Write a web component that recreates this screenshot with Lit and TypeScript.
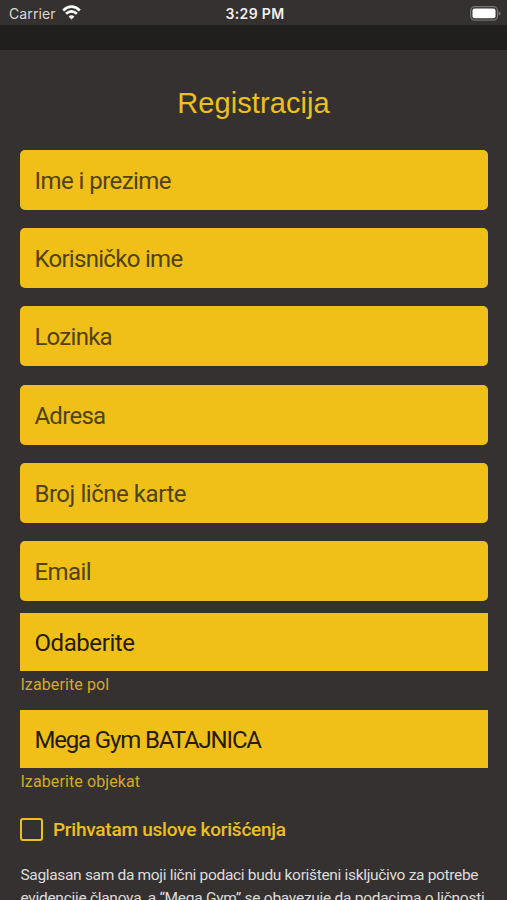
import { LitElement, html, css } from "lit";
import { customElement } from "lit/decorators.js";

interface Label {
  text: string;
  track: number;
}

const tracked = (l: Label) => html`<span style="letter-spacing:${l.track}px">${l.text}</span>`;

const FIELDS: Label[] = [
  { text: "Ime i prezime", track: -0.54 },
  { text: "Korisničko ime", track: -0.7 },
  { text: "Lozinka", track: -0.73 },
  { text: "Adresa", track: -0.7 },
  { text: "Broj lične karte", track: -0.45 },
  { text: "Email", track: -0.55 },
];

const SELECTS: { value: Label; hint: string }[] = [
  { value: { text: "Odaberite", track: -0.4 }, hint: "Izaberite pol" },
  { value: { text: "Mega Gym BATAJNICA", track: -1.15 }, hint: "Izaberite objekat" },
];

const LEGAL: Label[] = [
  { text: "Saglasan sam da moji lični podaci budu korišteni isključivo za potrebe", track: -0.32 },
  { text: "evidencije članova, a “Mega Gym” se obavezuje da podacima o ličnosti", track: -0.28 },
];

@customElement("status-bar")
class StatusBar extends LitElement {
  static styles = css`
    :host { display: grid; grid-template-columns: 1fr auto 1fr; align-items: center; height: 25px; padding: 0 6px 0 9px;
      font-family: Inter, sans-serif; color: #f2f0ef; box-sizing: border-box; }
    .carrier { display: flex; align-items: center; gap: 6px; font-size: 14px; color: #d9d7d6; padding-top: 2px; letter-spacing: 0.1px; }
    .wifi { display: block; margin-top: -2px; }
    .time { font-size: 14px; font-weight: 600; padding-top: 2px; letter-spacing: 0.35px; }
    .battery { display: block; justify-self: end; margin-top: 1px; }
  `;
  render() {
    return html`
      <div class="carrier"><span>Carrier</span>
        <svg class="wifi" width="19" height="15" viewBox="0 0 19 15" fill="none" stroke="#fff" stroke-width="2.7">
          <path d="M1.2 5.4 Q9.5 -2 17.8 5.4" />
          <path d="M4.1 8.8 Q9.5 4 14.9 8.8" />
          <path d="M9.5 14.4 L6.6 11.5 Q9.5 9 12.4 11.5 Z" fill="#fff" stroke="none" />
        </svg>
      </div>
      <div class="time">3:29 PM</div>
      <svg class="battery" width="31" height="15" viewBox="0 0 31 15">
        <rect x="0.7" y="0.7" width="26.8" height="13.4" rx="4" fill="none" stroke="#777372" stroke-width="1.3" />
        <rect x="2.5" y="2.5" width="23" height="9.8" rx="2" fill="#fff" />
        <path d="M28.6 5.2 Q30.6 6 30.6 7.4 Q30.6 8.8 28.6 9.6 Z" fill="#777372" />
      </svg>`;
  }
}

@customElement("form-field")
class FormField extends LitElement {
  static styles = css`
    :host { display: flex; align-items: center; height: 60px; padding: 2px 14px 0; box-sizing: border-box;
      background: #f0c019; border-radius: 5px; color: #51430f; font-size: 24px; }
  `;
  render() {
    return html`<slot></slot>`;
  }
}

@customElement("form-select")
class FormSelect extends LitElement {
  static styles = css`
    :host { display: block; }
    .box { display: flex; align-items: center; height: 58.5px; padding: 2px 14px 0; box-sizing: border-box;
      background: #f0c019; color: #241d08; font-size: 24px; }
    .hint { height: 26px; line-height: 27px; font-size: 16px; letter-spacing: 0.11px; color: #d3aa25; }
  `;
  render() {
    return html`<div class="box"><slot></slot></div><div class="hint"><slot name="hint"></slot></div>`;
  }
}

@customElement("app-root")
class AppRoot extends LitElement {
  static styles = css`
    :host { display: block; height: 900px; overflow: hidden; background: #353130; font-family: Roboto, sans-serif; }
    .band { height: 25px; background: #211f1d; }
    .title { margin: 0; padding-top: 35px; height: 65px; text-align: center;
      font: 400 29px/36px "Liberation Sans", Arial, sans-serif; color: #edc01d; letter-spacing: 0.1px; }
    .form { padding: 0 19.5px 0 20.4px; }
    .fields { display: grid; gap: 18.2px; }
    .selects { display: grid; gap: 12.2px; margin-top: 12px; }
    .terms { display: flex; align-items: center; gap: 10px; margin-top: 23px; height: 24px; color: #edc01d;
      font-size: 19px; font-weight: 500; letter-spacing: -0.24px; }
    .check { width: 22.6px; height: 23px; box-sizing: border-box; border: 2px solid #edc01d; border-radius: 3px; }
    .legal { margin: 22.5px 0 0; font-size: 15.5px; line-height: 23px; color: #dedcdb; white-space: nowrap; }
    .line { display: block; }
  `;
  render() {
    return html`
      <status-bar></status-bar>
      <div class="band"></div>
      <h1 class="title">Registracija</h1>
      <div class="form">
        <div class="fields">
          ${FIELDS.map((f) => html`<form-field>${tracked(f)}</form-field>`)}
        </div>
        <div class="selects">
          ${SELECTS.map((s) => html`<form-select>${tracked(s.value)}<span slot="hint">${s.hint}</span></form-select>`)}
        </div>
        <div class="terms"><span class="check"></span><span>Prihvatam uslove korišćenja</span></div>
        <p class="legal">${LEGAL.map((l) => html`<span class="line">${tracked(l)}</span>`)}</p>
      </div>`;
  }
}
